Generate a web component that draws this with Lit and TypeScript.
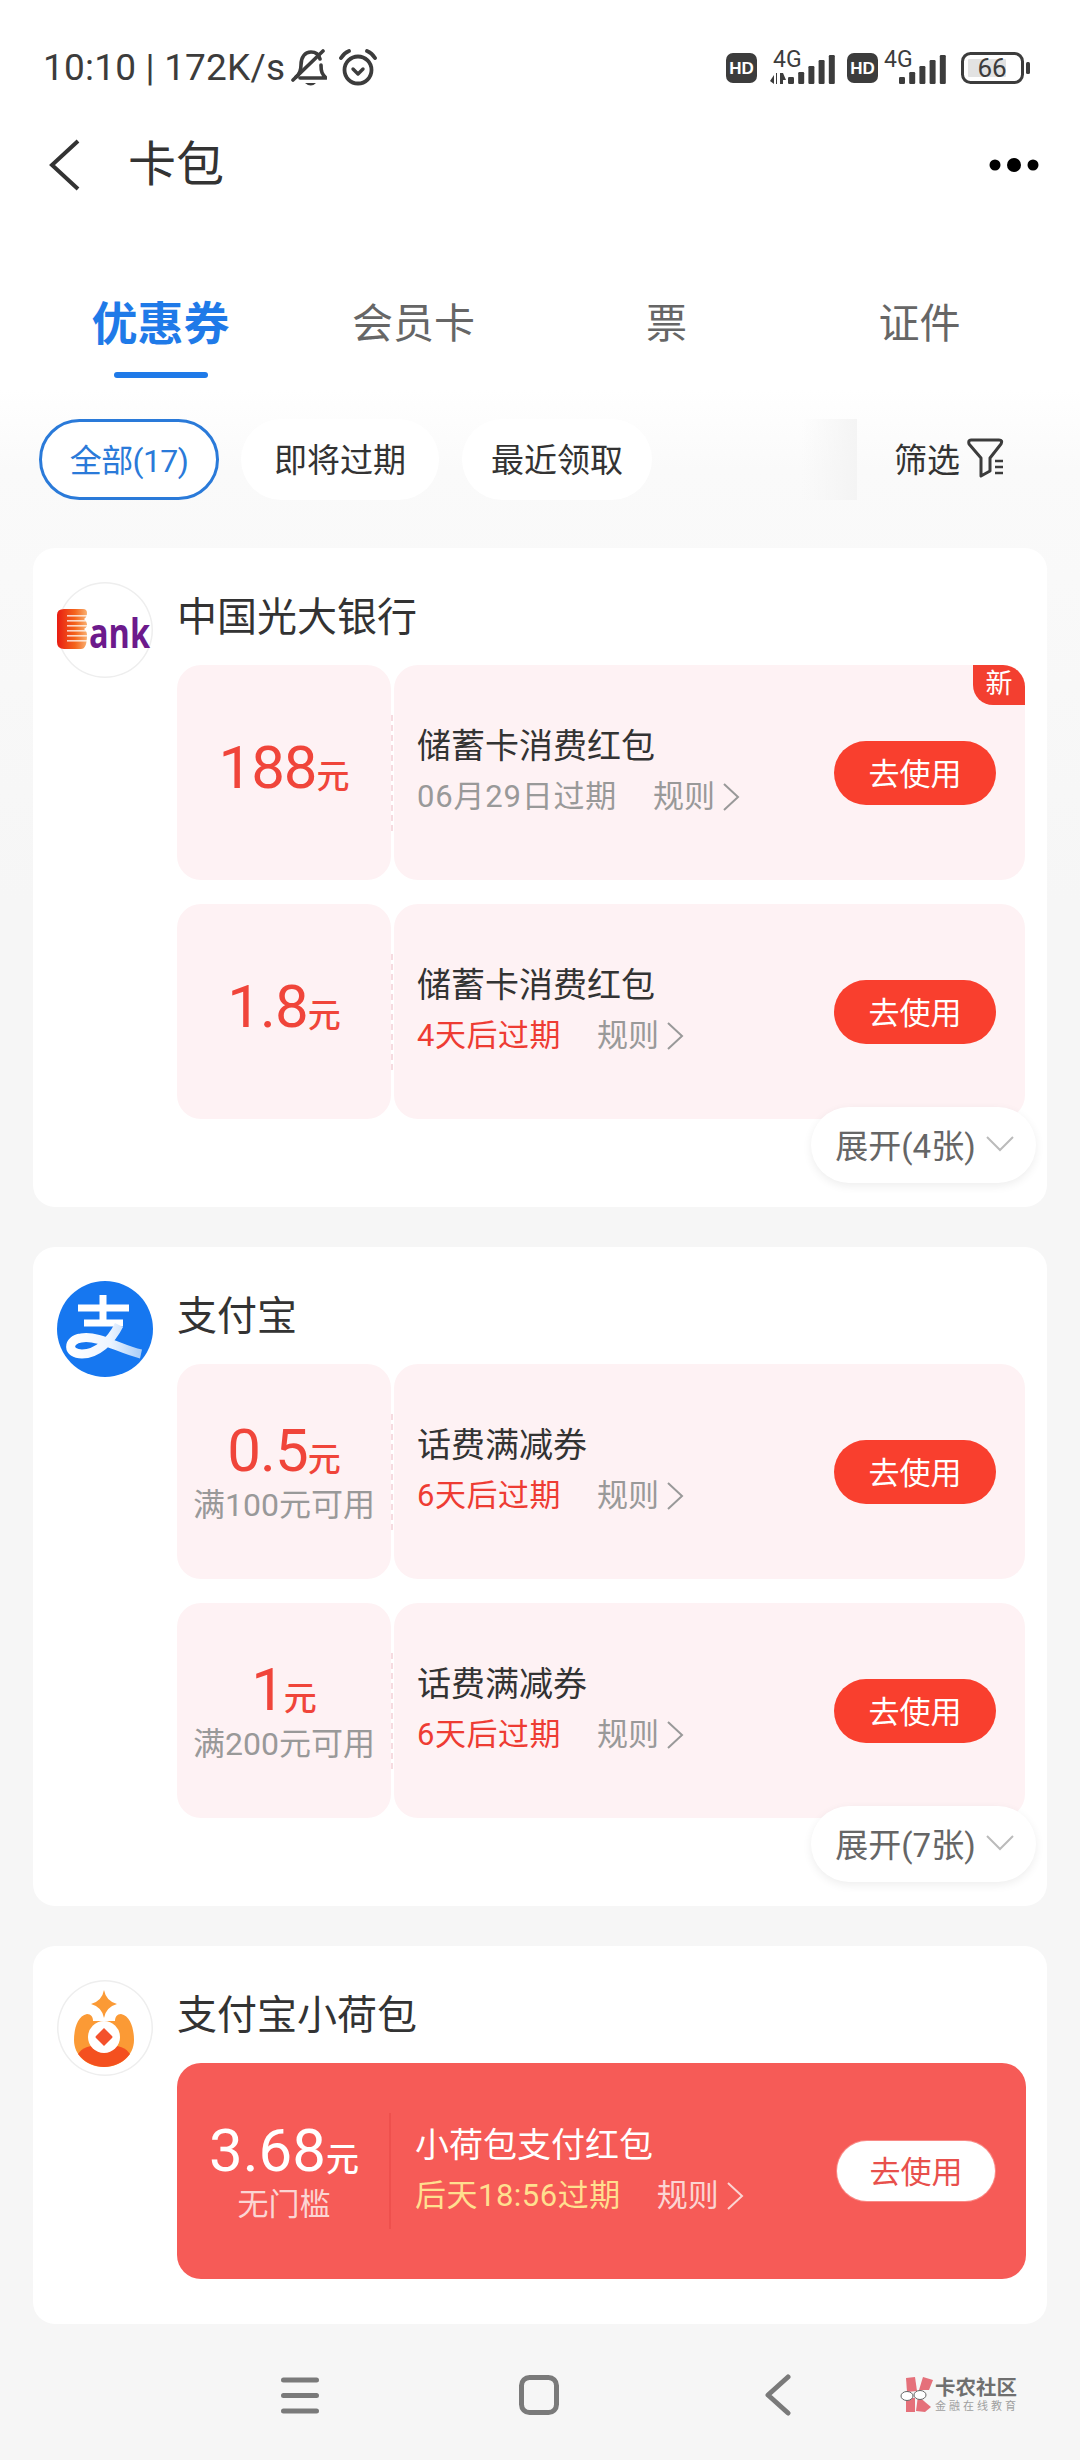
import { LitElement, html, css, svg } from "lit";
import { customElement } from "lit/decorators.js";

interface Coupon {
  amount: string;
  cond?: string;
  title: string;
  expiry: string;
  soon?: boolean;
  isNew?: boolean;
  solid?: boolean;
}
interface Group {
  name: string;
  logo: string;
  more?: string;
  coupons: Coupon[];
}

const groups: Group[] = [
  {
    name: "中国光大银行",
    logo: "bank",
    more: "展开(4张)",
    coupons: [
      { amount: "188", title: "储蓄卡消费红包", expiry: "06月29日过期", isNew: true },
      { amount: "1.8", title: "储蓄卡消费红包", expiry: "4天后过期", soon: true },
    ],
  },
  {
    name: "支付宝",
    logo: "alipay",
    more: "展开(7张)",
    coupons: [
      { amount: "0.5", cond: "满100元可用", title: "话费满减券", expiry: "6天后过期", soon: true },
      { amount: "1", cond: "满200元可用", title: "话费满减券", expiry: "6天后过期", soon: true },
    ],
  },
  {
    name: "支付宝小荷包",
    logo: "hebao",
    coupons: [
      { amount: "3.68", cond: "无门槛", title: "小荷包支付红包", expiry: "后天18:56过期", solid: true },
    ],
  },
];

const bars = (x0: number) =>
  [7, 12, 18, 24, 29].map(
    (h, i) => svg`<rect x=${x0 + i * 10.2} y=${39 - h} width="6" height=${h} rx="1.2" fill="#3c3c3c"></rect>`
  );

const hd = html`<svg class="hd" width="31" height="30" viewBox="0 0 31 30">
  <rect width="31" height="30" rx="7" fill="#3c3c3c"></rect>
  <text x="15.5" y="21" text-anchor="middle" class="hdt">HD</text>
</svg>`;

const logoBank = html`<svg class="logo ring" viewBox="0 0 96 96">
  <defs>
    <linearGradient id="eg" x1="0" x2="1" y1="0" y2="0">
      <stop offset="0" stop-color="#e81c12"></stop>
      <stop offset="0.6" stop-color="#f4641c"></stop>
      <stop offset="1" stop-color="#f9b070"></stop>
    </linearGradient>
  </defs>
  <path d="M0 33 Q0 27 7 27 H26 Q30 27 30 31 Q30 35 27 37 Q30 39 30 42 V44 Q29 46 27 47 Q30 49 30 53 Q30 67 24 67 H7 Q0 67 0 60 Z" fill="url(#eg)"></path>
  <g fill="#fff" opacity="0.75">
    <rect x="10" y="33" width="21" height="1.6"></rect>
    <rect x="10" y="38" width="21" height="1.6"></rect>
    <rect x="10" y="43" width="21" height="1.6"></rect>
    <rect x="10" y="48" width="21" height="1.6"></rect>
    <rect x="10" y="53" width="21" height="1.6"></rect>
    <rect x="10" y="58" width="21" height="1.6"></rect>
  </g>
  <text x="32" y="66" class="ank" textLength="61" lengthAdjust="spacingAndGlyphs">ank</text>
</svg>`;

const logoAlipay = html`<svg class="logo" viewBox="0 0 96 96">
  <defs>
    <linearGradient id="ag" x1="0" x2="1" y1="0" y2="0">
      <stop offset="0" stop-color="#ffffff"></stop>
      <stop offset="0.55" stop-color="#eef5ff"></stop>
      <stop offset="1" stop-color="#a9cdf8"></stop>
    </linearGradient>
  </defs>
  <circle cx="48" cy="48" r="48" fill="#1677f0"></circle>
  <path d="M21 27 H72 M46 14 V42 M27 42 H66" stroke="#fff" stroke-width="7" fill="none"></path>
  <path d="M62 44 C54 60 40 73 25 73 C10 73 10 59 24 57 C42 54 62 68 84 73" stroke="url(#ag)" stroke-width="9" fill="none"></path>
</svg>`;

const logoHebao = html`<svg class="logo ring" viewBox="0 0 96 96">
  <path d="M47 10 Q49 21 60 24 Q49 27 47 38 Q45 27 34 24 Q45 21 47 10 Z" fill="#fb9a35"></path>
  <path d="M30 34 C20 36 17 50 17 60 C17 76 31 87 47 87 C63 87 77 76 77 60 C77 50 74 36 64 34 C60 34 58 37 58 41 H36 C36 37 34 34 30 34 Z" fill="#fb9a35"></path>
  <path d="M21 74 C25 68 31 65 47 65 C63 65 69 68 73 74 C67 82 57 87 47 87 C37 87 27 82 21 74 Z" fill="#f4501f"></path>
  <circle cx="47" cy="57" r="16" fill="#fff"></circle>
  <path d="M47 48 L55 56 Q56 57 55 58 L47 66 L39 58 Q38 57 39 56 Z" fill="#f4512c"></path>
</svg>`;

const logos: Record<string, unknown> = { bank: logoBank, alipay: logoAlipay, hebao: logoHebao };

@customElement("app-root")
export class AppRoot extends LitElement {
  static styles = css`
    :host {
      display: flex;
      flex-direction: column;
      width: 1080px;
      height: 2460px;
      overflow: hidden;
      box-sizing: border-box;
      font-family: Roboto, "Noto Sans CJK SC", sans-serif;
      background: linear-gradient(#ffffff 0, #ffffff 390px, #fafafa 470px, #f6f6f6 900px);
      color: #333;
    }
    svg { display: block; flex: none; }
    .status {
      box-sizing: border-box;
      height: 115px;
      padding: 20px 50px 0 43px;
      display: flex;
      align-items: center;
      color: #3c3c3c;
      font-size: 37px;
    }
    .clock { white-space: nowrap; letter-spacing: 0.2px; }
    .bell { margin-left: 6px; }
    .alarm { margin-left: 12px; }
    .push { flex: 1; }
    .hdt { font: 700 17px "Liberation Sans", sans-serif; fill: #fff; }
    .gt { font: 400 23px Roboto, sans-serif; fill: #3c3c3c; }
    .sig1 { margin: 0 12px 0 13px; }
    .sig2 { margin: 0 14px 0 6px; }
    .batt-t { font: 400 26px Roboto, sans-serif; fill: #3c3c3c; }

    .header {
      height: 100px;
      display: flex;
      align-items: center;
      padding: 0 41px 0 48px;
    }
    .header h1 {
      margin: 0 0 0 48px;
      font-size: 48px;
      font-weight: 400;
      color: #333;
      flex: 1;
      line-height: 62px;
    }
    .tabs {
      margin-top: 72px;
      padding: 0 34px;
      display: grid;
      grid-template-columns: repeat(4, 253px);
    }
    .tab {
      display: flex;
      flex-direction: column;
      align-items: center;
      font-size: 41px;
      line-height: 74px;
      color: #666;
    }
    .tab.on { color: #1f7ae8; font-weight: 700; font-size: 46px; }
    .tab.on::after {
      content: "";
      display: block;
      width: 94px;
      height: 6px;
      border-radius: 3px;
      background: #1f7ae8;
      margin-top: 11px;
    }
    .chips {
      margin-top: 41px;
      height: 81px;
      display: flex;
      align-items: stretch;
      font-size: 33px;
    }
    .chip-row {
      width: 857px;
      box-sizing: border-box;
      padding-left: 39px;
      display: flex;
      background: linear-gradient(90deg, transparent 0, transparent 802px, #f4f4f4 100%);
    }
    .chip {
      box-sizing: border-box;
      border-radius: 41px;
      background: #fff;
      display: flex;
      align-items: center;
      justify-content: center;
      color: #333;
      white-space: nowrap;
      padding-bottom: 3px;
    }
    .chip.a { width: 180px; border: 3px solid #2a7ad9; color: #2a7ad9; font-size: 32px; letter-spacing: -0.6px; }
    .chip.b { width: 198px; margin-left: 22px; }
    .chip.c { width: 190px; margin-left: 23px; }
    .filter {
      flex: 1;
      display: flex;
      align-items: center;
      padding-left: 37px;
      padding-bottom: 3px;
      color: #333;
      gap: 7px;
    }
    .list {
      margin-top: 48px;
      display: flex;
      flex-direction: column;
      gap: 40px;
      padding: 0 33px;
    }
    .card {
      position: relative;
      background: #fff;
      border-radius: 22px;
      padding: 34px 21px 88px 24px;
      display: grid;
      grid-template-columns: 120px 849px;
    }
    .card.last { padding-bottom: 45px; }
    .logo { width: 96px; height: 96px; border-radius: 50%; overflow: visible; }
    .logo.ring { box-shadow: inset 0 0 0 1.5px #eeeeee; }
    .ank { font: 700 41px "Open Sans", sans-serif; fill: #6c1a8c; }
    .name {
      height: 72px;
      line-height: 72px;
      margin-bottom: 11px;
      font-size: 40px;
      color: #333;
    }
    .coupons { display: flex; flex-direction: column; gap: 24px; }
    .coupon {
      height: 215px;
      display: grid;
      grid-template-columns: 214px 631px;
      gap: 3px;
      position: relative;
    }
    .stub, .main { background: #fef2f4; border-radius: 24px; }
    .stub {
      display: flex;
      flex-direction: column;
      align-items: center;
      justify-content: center;
      position: relative;
    }
    .stub::after {
      content: "";
      position: absolute;
      right: -2px;
      top: 50px;
      height: 116px;
      border-right: 2px dashed #f6dbe0;
    }
    .amt {
      font-size: 60px;
      line-height: 60px;
      color: #f0453a;
      white-space: nowrap;
      letter-spacing: -1px;
    }
    .amt small { font-size: 33px; font-weight: 500; letter-spacing: 0; }
    .amt.tight { line-height: 52px; margin-top: 6px; }
    .cond { font-size: 32px; line-height: 38px; color: #999; white-space: nowrap; }
    .main {
      position: relative;
      display: flex;
      align-items: center;
      justify-content: space-between;
      padding: 0 29px 0 23px;
    }
    .title { font-size: 34px; line-height: 44px; color: #333; white-space: nowrap; margin-top: -2px; }
    .sub {
      margin-top: 7px;
      display: flex;
      align-items: center;
      font-size: 31px;
      line-height: 44px;
      color: #999;
      white-space: nowrap;
    }
    .exp { letter-spacing: 0.8px; }
    .sub .exp.soon { color: #ee3c33; letter-spacing: 0.5px; }
    .rule { margin-left: 36px; font-size: 31px; }
    .sub svg { margin-left: 7px; }
    .btn {
      width: 162px;
      height: 64px;
      box-sizing: border-box;
      padding-bottom: 3px;
      border-radius: 32px;
      background: #f93f2e;
      color: #fff;
      font-size: 31px;
      display: flex;
      align-items: center;
      justify-content: center;
    }
    .badge {
      position: absolute;
      top: 0;
      right: 0;
      width: 52px;
      height: 40px;
      background: #f33f30;
      color: #fff;
      font-size: 27px;
      line-height: 38px;
      text-align: center;
      border-radius: 0 22px 0 20px;
    }
    .coupon.solid { display: flex; height: 216px; background: #f65b57; border-radius: 24px; gap: 0; }
    .solid .stub, .solid .main { background: none; }
    .solid .stub { width: 214px; flex: none; }
    .solid .stub::after {
      right: 0;
      top: 50px;
      height: 116px;
      border-right: 2px solid #ee504d;
    }
    .solid .main { flex: 1; padding-left: 24px; padding-right: 31px; }
    .solid .amt { color: #fff; letter-spacing: 0; }
    .solid .cond { color: #fbd5d3; font-size: 31px; }
    .solid .title { color: #fff; }
    .solid .exp { color: #ffdf8f; letter-spacing: 0.5px; }
    .solid .rule { color: #fbd5d3; }
    .solid .btn { background: #fff; color: #e8504c; box-shadow: 0 0 0 1px #f98a86; width: 158px; height: 60px; }
    .more {
      position: absolute;
      right: 11px;
      bottom: 24px;
      width: 225px;
      height: 76px;
      box-sizing: border-box;
      padding: 0 0 2px 2px;
      border-radius: 38px;
      background: #fff;
      box-shadow: 0 3px 10px rgba(0, 0, 0, 0.07);
      display: flex;
      align-items: center;
      justify-content: center;
      gap: 10px;
      font-size: 33px;
      color: #666;
      white-space: nowrap;
    }
    .nav {
      flex: 1;
      box-sizing: border-box;
      padding: 6px 0 0 281px;
      display: flex;
      align-items: center;
    }
    .n2 { margin-left: 200px; }
    .n3 { margin-left: 205px; }
    .mark { margin-left: 109px; display: flex; align-items: center; gap: 2px; }
    .mark-t { display: flex; flex-direction: column; line-height: 1; }
    .mark-a { font-size: 20.5px; font-weight: 700; color: #6f6f6f; }
    .mark-b { font-size: 11px; color: #a0a0a0; letter-spacing: 3px; margin-top: 3px; }
  `;

  private coupon(c: Coupon) {
    const ruleColor = c.solid ? "#fbd5d3" : "#999";
    return html`<div class="coupon ${c.solid ? "solid" : ""}">
      <div class="stub">
        <div class="amt ${c.cond ? "tight" : ""}">${c.amount}<small>元</small></div>
        ${c.cond ? html`<div class="cond">${c.cond}</div>` : ""}
      </div>
      <div class="main">
        <div>
          <div class="title">${c.title}</div>
          <div class="sub">
            <span class="exp ${c.soon ? "soon" : ""}">${c.expiry}</span>
            <span class="rule">规则</span>
            <svg width="18" height="30" viewBox="0 0 18 30"><path d="M2 2 L16 15 L2 28" fill="none" stroke=${ruleColor} stroke-width="2"></path></svg>
          </div>
        </div>
        <div class="btn">去使用</div>
        ${c.isNew ? html`<div class="badge">新</div>` : ""}
      </div>
    </div>`;
  }

  render() {
    return html`
      <div class="status">
        <span class="clock">10:10 | 172K/s</span>
        <svg class="bell" width="36" height="40" viewBox="0 0 36 40">
          <path d="M5 29 Q10 25 10 17 C10 9 14 4 20 4 C25 4 28 7 29 11 M30 17 C30 24 31 26 35 30 H9" fill="none" stroke="#3c3c3c" stroke-width="3.6" stroke-linecap="round" stroke-linejoin="round"></path>
          <path d="M2 32 L32 3" stroke="#3c3c3c" stroke-width="3.6" stroke-linecap="round"></path>
          <path d="M14 35 H25 Q20 40 14 35 Z" fill="#3c3c3c"></path>
        </svg>
        <svg class="alarm" width="38" height="38" viewBox="0 0 38 38">
          <circle cx="19" cy="21" r="13.5" fill="none" stroke="#3c3c3c" stroke-width="3.8"></circle>
          <path d="M2 9 Q5 4 10 2 M36 9 Q33 4 28 2" fill="none" stroke="#3c3c3c" stroke-width="3.8" stroke-linecap="round"></path>
          <path d="M14 20 L19 25 L24 20" fill="none" stroke="#3c3c3c" stroke-width="3.4" stroke-linecap="round" stroke-linejoin="round"></path>
        </svg>
        <span class="push"></span>
        ${hd}
        <svg class="sig1" width="65" height="46" viewBox="0 0 65 46">
          <text x="3" y="22" class="gt">4G</text>
          <path d="M4 39 V30 L0 36 Z M6 39 V28 H7 V39 Z" fill="#3c3c3c"></path>
          <path d="M10 28 V39 H13 V28 Z M13 28 L16 35 H13 Z" fill="#3c3c3c"></path>
          ${bars(18)}
        </svg>
        ${hd}
        <svg class="sig2" width="63" height="46" viewBox="0 0 63 46">
          <text x="0" y="22" class="gt">4G</text>
          ${bars(15)}
        </svg>
        <svg width="69" height="32" viewBox="0 0 69 32">
          <rect x="1.5" y="1.5" width="60" height="29" rx="8" fill="none" stroke="#3c3c3c" stroke-width="3"></rect>
          <rect x="7" y="7" width="38" height="18" rx="1" fill="#e2e2e2"></rect>
          <rect x="65" y="10" width="4" height="12" rx="1.5" fill="#3c3c3c"></rect>
          <text x="31" y="25" text-anchor="middle" class="batt-t">66</text>
        </svg>
      </div>

      <div class="header">
        <svg width="32" height="52" viewBox="0 0 32 52">
          <path d="M30 2 L4 26 L30 50" fill="none" stroke="#333" stroke-width="4"></path>
        </svg>
        <h1>卡包</h1>
        <svg width="50" height="18" viewBox="0 0 50 18">
          <circle cx="6" cy="9" r="5.5" fill="#000"></circle>
          <circle cx="25" cy="9" r="7" fill="#000"></circle>
          <circle cx="44" cy="9" r="5.5" fill="#000"></circle>
        </svg>
      </div>

      <div class="tabs">
        <div class="tab on">优惠券</div>
        <div class="tab">会员卡</div>
        <div class="tab">票</div>
        <div class="tab">证件</div>
      </div>

      <div class="chips">
        <div class="chip-row">
          <div class="chip a">全部(17)</div>
          <div class="chip b">即将过期</div>
          <div class="chip c">最近领取</div>
        </div>
        <div class="filter">
          筛选
          <svg width="38" height="40" viewBox="0 0 38 40">
            <path d="M4 2 H32 Q36 2 34 6 L23 20 V33 L14 38 V20 L2 6 Q1 2 4 2 Z" fill="none" stroke="#3c3c3c" stroke-width="3" stroke-linejoin="round"></path>
            <path d="M28 23 H36 M28 29 H36 M28 35 H36" stroke="#3c3c3c" stroke-width="2.4"></path>
          </svg>
        </div>
      </div>

      <div class="list">
        ${groups.map(
          (g) => html`<div class="card ${g.more ? "" : "last"}">
            <div>${logos[g.logo]}</div>
            <div>
              <div class="name">${g.name}</div>
              <div class="coupons">${g.coupons.map((c) => this.coupon(c))}</div>
            </div>
            ${g.more
              ? html`<div class="more">
                  ${g.more}
                  <svg width="28" height="16" viewBox="0 0 28 16"><path d="M1 1 L14 14 L27 1" fill="none" stroke="#bbb" stroke-width="2"></path></svg>
                </div>`
              : ""}
          </div>`
        )}
      </div>

      <div class="nav">
        <svg width="38" height="37" viewBox="0 0 38 37">
          <path d="M2.5 3 H35.5 M2.5 18.5 H35.5 M2.5 34 H35.5" stroke="#7a7a7a" stroke-width="5" stroke-linecap="round"></path>
        </svg>
        <svg class="n2" width="40" height="40" viewBox="0 0 40 40">
          <rect x="2.5" y="2.5" width="35" height="35" rx="8" fill="none" stroke="#7a7a7a" stroke-width="5"></rect>
        </svg>
        <svg class="n3" width="27" height="42" viewBox="0 0 27 42">
          <path d="M24 3 L4 21 L24 39" fill="none" stroke="#7a7a7a" stroke-width="5" stroke-linecap="round" stroke-linejoin="round"></path>
        </svg>
        <div class="mark">
          <svg width="33" height="36" viewBox="0 0 33 36">
            <path d="M6 1 L15 0 L17 14 L7 15 Z" fill="#e5707a"></path>
            <path d="M19 13 L23 0 L33 3 L29 13 Z" fill="#e5707a"></path>
            <path d="M6 21 L15 21 L15 35 L6 35 Z" fill="#e5707a"></path>
            <path d="M18 19 L31 30 L25 35 L16 34 Z" fill="#e5707a"></path>
            <ellipse cx="7" cy="19" rx="6" ry="4.5" fill="#fff" stroke="#666" stroke-width="1"></ellipse>
            <ellipse cx="20" cy="18" rx="6" ry="4.5" fill="#fff" stroke="#666" stroke-width="1"></ellipse>
          </svg>
          <div class="mark-t">
            <span class="mark-a">卡农社区</span>
            <span class="mark-b">金融在线教育</span>
          </div>
        </div>
      </div>
    `;
  }
}
